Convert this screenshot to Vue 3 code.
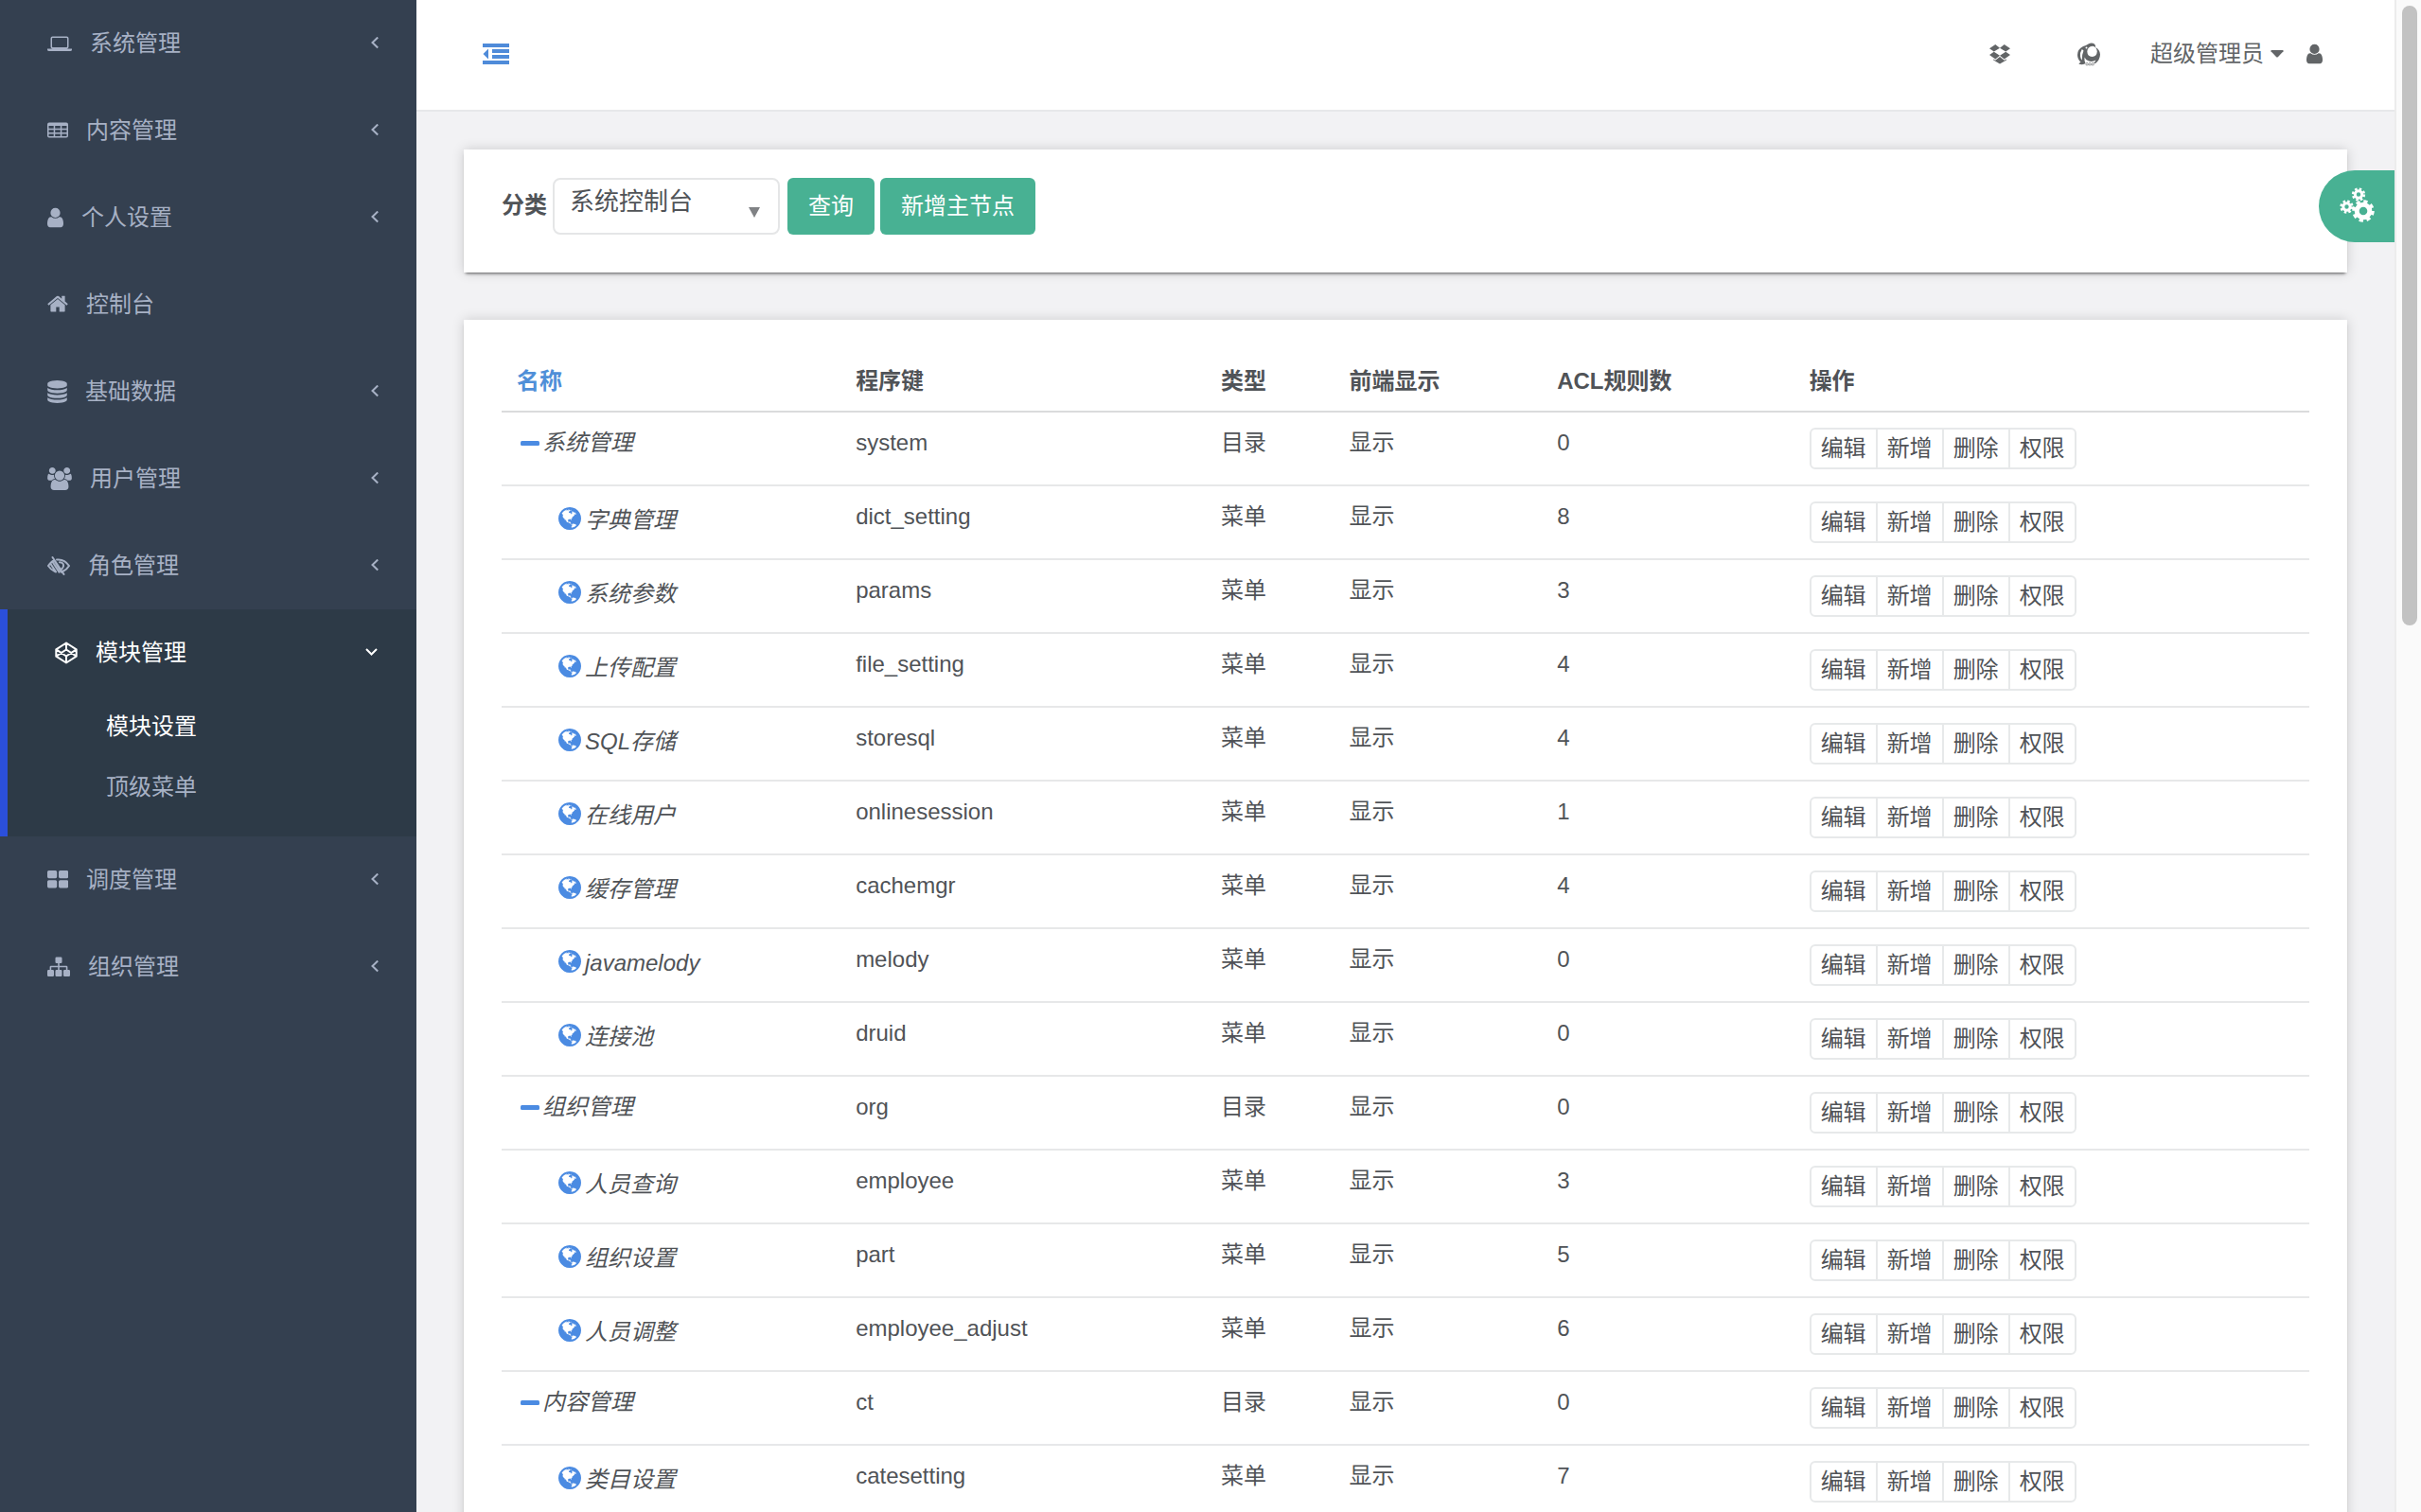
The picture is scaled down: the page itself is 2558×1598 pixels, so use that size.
<script setup>
import { ref } from 'vue'

const menu = [
  { icon: 'laptop', label: '系统管理', arrow: true },
  { icon: 'table', label: '内容管理', arrow: true },
  { icon: 'user', label: '个人设置', arrow: true },
  { icon: 'home', label: '控制台', arrow: false },
  { icon: 'database', label: '基础数据', arrow: true },
  { icon: 'users', label: '用户管理', arrow: true },
  { icon: 'lowvision', label: '角色管理', arrow: true },
  {
    icon: 'codepen',
    label: '模块管理',
    arrow: true,
    children: [
      { label: '模块设置', current: true },
      { label: '顶级菜单', current: false }
    ]
  },
  { icon: 'tiles', label: '调度管理', arrow: true },
  { icon: 'sitemap', label: '组织管理', arrow: true }
]

const userPath =
  'M1536 1399q0 109-62.5 187t-150.5 78h-854q-88 0-150.5-78t-62.5-187q0-85 8.5-160.5t31.5-152 58.5-131 94-89 134.5-34.5q131 128 313 128t313-128q76 0 134.5 34.5t94 89 58.5 131 31.5 152 8.5 160.5zm-256-887q0 159-112.5 271.5t-271.5 112.5-271.5-112.5-112.5-271.5 112.5-271.5 271.5-112.5 271.5 112.5 112.5 271.5z'

const icons = {
  laptop: {
    box: '0 0 26 24',
    w: 26,
    d: 'M5.500 4.500h15q2 0 2 2v9q0 2-2 2h-15q-2 0-2-2v-9q0-2 2-2zM5.700 6q-.7 0-.7.7v8.600q0 .7.700.7h14.600q.7 0 .7-.7V6.700q0-.7-.7-.7zM0 17.600h26v.8q0 1.600-2 1.600H2q-2 0-2-1.600z'
  },
  table: {
    box: '0 0 22 24',
    w: 22,
    d: 'M2 3.500h18q2 0 2 2v12q0 2-2 2H2q-2 0-2-2v-12q0-2 2-2zM1.500 6.900v2.800h5.200V6.900zM8.200 6.900v2.800h5.600V6.900zM15.300 6.900v2.800h5.200V6.900zM1.500 11.200v2.800h5.200v-2.800zM8.200 11.200v2.800h5.600v-2.800zM15.300 11.200v2.800h5.200v-2.800zM1.500 15.500v2.500h5.200v-2.500zM8.200 15.500v2.500h5.600v-2.500zM15.300 15.500v2.500h5.200v-2.500z'
  },
  user: { box: '256 0 1280 1792', w: 17, d: userPath },
  home: {
    box: '64 64 1664 1792',
    w: 22,
    d: 'M1472 992v480q0 26-19 45t-45 19h-384v-384h-256v384h-384q-26 0-45-19t-19-45v-480q0-1 .5-3t.5-3l575-474 575 474q1 2 1 6zm223-69l-62 74q-8 9-21 11h-3q-13 0-21-7l-692-577-692 577q-12 8-24 7-13-2-21-11l-62-74q-8-10-7-23.500t11-21.500l719-599q32-26 76-26t76 26l244 204v-195q0-14 9-23t23-9h192q14 0 23 9t9 23v408l219 182q10 8 11 21.500t-7 23.500z'
  },
  database: {
    box: '128 0 1536 1792',
    w: 21,
    d: 'M896 768q237 0 443-43t325-127v170q0 69-103 128t-280 93.500-385 34.500-385-34.500-280-93.500-103-128v-170q119 84 325 127t443 43zm0 768q237 0 443-43t325-127v170q0 69-103 128t-280 93.500-385 34.500-385-34.500-280-93.500-103-128v-170q119 84 325 127t443 43zm0-384q237 0 443-43t325-127v170q0 69-103 128t-280 93.500-385 34.500-385-34.500-280-93.500-103-128v-170q119 84 325 127t443 43zm0-1152q208 0 385 34.500t280 93.500 103 128v128q0 69-103 128t-280 93.500-385 34.500-385-34.500-280-93.500-103-128v-128q0-69 103-128t280-93.500 385-34.500z'
  },
  users: {
    box: '0 0 1920 1792',
    w: 26,
    d: 'M593 896q-162 5-265 128h-134q-82 0-138-40.500t-56-118.500q0-353 124-353 6 0 43.500 21t97.500 42.500 119 21.500q67 0 133-23-5 37-5 66 0 139 81 256zm1071 637q0 120-73 189.500t-194 69.500h-874q-121 0-194-69.500t-73-189.500q0-53 3.500-103.500t14-109 26.500-108.500 43-97.500 62-81 85.500-53.500 111.500-20q10 0 43 21.500t73 48 107 48 135 21.500 135-21.500 107-48 73-48 43-21.500q61 0 111.500 20t85.500 53.500 62 81 43 97.500 26.500 108.500 14 109 3.500 103.500zm-1024-1277q0 106-75 181t-181 75-181-75-75-181 75-181 181-75 181 75 75 181zm704 384q0 159-112.500 271.500t-271.500 112.500-271.500-112.500-112.500-271.500 112.500-271.500 271.500-112.500 271.500 112.500 112.500 271.500zm576 225q0 78-56 118.500t-138 40.500h-134q-103-123-265-128 81-117 81-256 0-29-5-66 66 23 133 23 59 0 119-21.500t97.500-42.500 43.500-21q124 0 124 353zm-128-609q0 106-75 181t-181 75-181-75-75-181 75-181 181-75 181 75 75 181z'
  },
  lowvision: {
    box: '0 0 24 24',
    w: 24,
    s: 'M5.500 3L17.500 21M10 5.500Q18 4.500 23 12Q20.500 16 17 17.500M13 8.200Q17.500 8.500 17 12.500Q16.500 14 15.500 15M1 12Q4 7.500 7.500 6.300M1 12Q4 16.500 8 18M3.500 10L9 18.400M5.800 8.300L12.500 18.600M8.200 8L15 18.600'
  },
  codepen: {
    box: '0 0 24 24',
    w: 24,
    s: 'M12 1.500L22.700 8.300V15.700L12 22.500L1.300 15.700V8.300zM12 1.500V8.500M12 15.500V22.500M1.300 8.300L12 15.500L22.700 8.300M1.300 15.700L12 8.500L22.700 15.700'
  },
  tiles: {
    box: '0 0 22 24',
    w: 22,
    d: 'M1.600 2h7q1.600 0 1.600 1.600v5q0 1.600-1.600 1.600h-7Q0 10.200 0 8.600v-5Q0 2 1.600 2zM13.600 2h7q1.600 0 1.600 1.600v5q0 1.600-1.600 1.600h-7q-1.600 0-1.600-1.600v-5q0-1.600 1.600-1.600zM1.600 12.200h7q1.600 0 1.600 1.600v5q0 1.600-1.600 1.600h-7q-1.600 0-1.600-1.600v-5q0-1.600 1.600-1.600zM13.600 12.200h7q1.600 0 1.600 1.600v5q0 1.600-1.600 1.600h-7q-1.600 0-1.600-1.600v-5q0-1.600 1.600-1.600z'
  },
  sitemap: {
    box: '0 0 24 24',
    w: 24,
    d: 'M9.700 1.500h4.600q1.200 0 1.200 1.200v4q0 1.200-1.200 1.200h-1.500v2.800h7.300q1.300 0 1.300 1.300v3h1.400q1.200 0 1.200 1.200v4.600q0 1.200-1.200 1.200h-4.600q-1.200 0-1.200-1.200v-4.600q0-1.200 1.200-1.200h1.600v-2.700h-7v2.700h1.500q1.200 0 1.200 1.200v4.600q0 1.200-1.200 1.200H9.700q-1.200 0-1.200-1.200v-4.600q0-1.200 1.200-1.200h1.500v-2.700h-7v2.700h1.600q1.200 0 1.200 1.200v4.600q0 1.200-1.200 1.200H1.200Q0 22 0 20.800v-4.600q0-1.200 1.200-1.200h1.400v-3q0-1.300 1.300-1.300h7.300V7.900H9.700q-1.200 0-1.200-1.200v-4q0-1.200 1.200-1.200z'
  }
}

const globePath =
  'M896 128q209 0 385.500 103t279.500 279.500 103 385.500-103 385.500-279.500 279.500-385.500 103-385.500-103-279.500-279.500-103-385.500 103-385.500 279.500-279.500 385.500-103zm274 521q-2 1-9.500 9.500t-13.500 9.500q2 0 4.500-5t5-11 3.500-7q6-7 22-15 14-6 52-12 34-8 51 11-2-2 9.500-13t14.500-12q3-2 15-4.500t15-7.500l2-22q-12 1-17.500-7t-6.500-21q0 2-6 8 0-7-4.500-8t-11.500 1-9 1q-10-3-15-7.500t-8-16.500-4-15q-2-5-9.500-10.500t-9.500-10.500q-1-2-2.500-5.500t-3-6.500-4-5.500-5.500-2.500-7 5-7.500 10-4.500 5q-3-2-6-1.500t-4.500 1-4.500 3-5 3.500q-3 2-8.500 3t-8.500 2q15-5-1-11-10-4-16-3 9-4 7.500-12t-8.500-14h5q-1-4-8.500-8.500t-17.500-8.500-13-6q-8-5-34-9.500t-33-.5q-5 6-4.500 10.500t4 14 3.500 12.500q1 6-5.500 13t-6.500 12q0 7 14 15.500t10 21.500q-3 8-16 16t-16 12q-5 8-1.500 18.500t10.500 16.500q2 2 1.500 4t-3.500 4.500-5.500 4-6.500 3.500l-3 2q-11 5-20.500-6t-13.500-26q-7-25-16-30-23-8-29 1-5-13-41-26-25-9-58-4 6-1 0-15-7-15-19-12 3-6 4-17.500t1-13.500q3-13 12-23 1-1 7-8.500t9.500-13.500.5-6q35 4 50-11 5-5 11.500-17t10.500-17q9-6 14-5.500t14.500 5.500 14.500 5q14 1 15.500-11t-7.500-20q12 1 3-17-4-7-8-9-12-4-27 5-8 4 2 8-1-1-9.500 10.500t-16.500 17.500-16-5q-1-1-5.500-13.500t-9.500-13.500q-8 0-16 15 3-8-11-15t-24-8q19-12-8-27-7-4-20.500-5t-19.500 4q-5 7-5.500 11.500t5 8 10.500 5.500 11.500 4 8.500 3q14 10 8 14-2 1-8.500 3.500t-11.500 4.500-6 4q-3 4 0 14t-2 14q-5-5-9-17.500t-7-16.500q7 9-25 6l-10-1q-4 0-16 2t-20.500 1-13.500-8q-4-8 0-20 1-4 4-2-4-3-11-9.500t-10-8.500q-46 15-94 41 6 1 12-1 5-2 13-6.500t10-5.500q34-14 42-7l5-5q14 16 20 25-7-4-30-1-20 6-22 12 7 12 5 18-4-3-11.500-10t-14.500-11-15-5q-16 0-22 1-146 80-235 222 7 7 12 8 4 1 5 9t2.500 11 11.500-3q9 8 3 19 1-1 44 27 19 17 21 21 3 11-10 18-1-2-9-9t-9-4q-3 5 .5 18.500t10.500 12.500q-7 0-9.500 16t-2.500 35.500-1 23.500l2 1q-3 12 5.500 34.500t21.500 19.500q-13 3 20 43 6 8 8 9 3 2 12 7.500t15 10 10 10.500q4 5 10 22.500t14 23.500q-2 6 9.500 20t10.500 23q-1 0-2.500 1t-2.500 1q3 7 15.500 14t15.500 13q1 3 2 10t3 11 8 2q2-20-24-62-15-25-17-29-3-5-5.500-15.500t-4.500-14.500q2 0 6 1.500t8.500 3.500 7.500 4 2 3q-3 7 2 17.500t12 18.500 17 19 12 13q6 6 14 19.500t0 13.500q9 0 20 10.500t17 19.500q5 8 8 26t5 24q2 7 8.500 13.500t12.500 9.500l16 8 13 7q5 2 18.500 10.500t21.500 11.500q10 4 16 4t14.500-2.500 13.500-3.500q15-2 29 15t21 21q36 19 55 11-2 1 .5 7.500t8 15.500 9 14.500 5.500 8.500q5 6 18 15t18 15q6-4 7-9-3 8 7 20t18 10q14-3 14-32-31 15-49-18 0-1-2.500-5.500t-4-8.500-2.500-8.500 0-7.500 5-3q9 0 10-3.500t-2-12.500-4-13q-1-8-11-20t-12-15q-5 9-16 8t-16-9q0 1-1.500 5.500t-1.500 6.500q-13 0-15-1 1-3 2.500-17.500t3.500-22.500q1-4 5.500-12t7.500-14.500 4-12.500-4.500-9.500-17.500-2.500q-19 1-26 20-1 3-3 10.500t-5 11.500-9 7q-7 3-24 2t-24-5q-13-8-22.500-29t-9.500-37q0-10 2.500-26.500t3-25-5.500-24.500q3-2 9-9.500t10-10.500q2-1 4.500-1.500t4.500 0 4-1.500 3-6q-1-1-4-3-3-3-4-3 7 3 28.500-1.500t27.500 1.500q15 11 22-2 0-1-2.500-9.500t-.5-13.500q5 27 29 9 3 3 15.500 5t17.500 5q3 2 7 5.500t5.500 4.500 5-.5 8.500-6.500q10 14 12 24 11 40 19 44 7 3 11 2t4.500-9.500 0-14-1.500-12.500l-1-8v-18l-1-8q-15-3-18.500-12t1.500-18.500 15-18.500q1-1 8-3.500t15.500-6.500 12.500-8q21-19 15-35 7 0 11-9-1 0-5-3t-7.500-5-4.500-2q9-5 2-16 5-3 7.500-11t7.500-10q9 12 21 2 7-8 1-16 5-7 20.500-10.500t18.500-9.500q7 2 8-2t1-12 3-12q4-5 15-9t13-5l17-11q3-4 0-4 18 2 31-11 10-11-6-20 3-6-3-9.500t-15-5.500q3-1 11.500-.5t10.500-1.500q15-10-7-16-17-5-43 12zm-163 877q206-36 351-189-3-3-12.500-4.500t-12.500-3.500q-18-7-24-8 1-7-2.500-13t-8-9-12.500-8-11-7q-2-2-7-6t-7-5.500-7.500-4.500-8.500-2-10 1l-3 1q-3 1-5.500 2.500t-5.500 3-4 3 0 2.500q-21-17-36-22-5-1-11-5.500t-10.500-7-10-1.500-11.500 7q-5 5-6 15t-2 13q-7-5 0-17.500t2-18.500q-3-6-10.500-4.500t-12 4.500-11.500 8.500-9 6.500-8.500 5.500-8.500 7.500q-3 4-6 12t-5 11q-2-4-11.500-6.500t-9.500-5.500q2 10 4 35t5 38q7 31-12 48-27 25-29 40-4 22 12 26 0 7-8 20.500t-7 21.500q0 6 2 16z'

const rows = [
  ['系统管理', 'system', 0, true],
  ['字典管理', 'dict_setting', 8],
  ['系统参数', 'params', 3],
  ['上传配置', 'file_setting', 4],
  ['SQL存储', 'storesql', 4],
  ['在线用户', 'onlinesession', 1],
  ['缓存管理', 'cachemgr', 4],
  ['javamelody', 'melody', 0],
  ['连接池', 'druid', 0],
  ['组织管理', 'org', 0, true],
  ['人员查询', 'employee', 3],
  ['组织设置', 'part', 5],
  ['人员调整', 'employee_adjust', 6],
  ['内容管理', 'ct', 0, true],
  ['类目设置', 'catesetting', 7]
].map(([name, key, rules, folder = false]) => ({ name, key, rules, folder }))

const actions = ['编辑', '新增', '删除', '权限']
const category = ref('系统控制台')
</script>

<template>
  <div class="app">
    <nav class="sidebar">
      <ul class="menu">
        <li v-for="item in menu" :key="item.label" :class="{ active: item.children }">
          <a href="#" class="menu-link">
            <svg class="menu-icon" :viewBox="icons[item.icon].box" :width="icons[item.icon].w" height="24" aria-hidden="true">
              <path v-if="icons[item.icon].d" :d="icons[item.icon].d" fill="currentColor" fill-rule="evenodd" />
              <path v-else :d="icons[item.icon].s" fill="none" stroke="currentColor" stroke-width="2" stroke-linejoin="round" stroke-linecap="round" />
            </svg>
            <span class="menu-label">{{ item.label }}</span>
            <svg v-if="item.children" class="arrow" width="14" height="14" viewBox="0 0 14 14" aria-hidden="true">
              <path d="M1 3L6.500 8.500L12 3" fill="none" stroke="currentColor" stroke-width="2" />
            </svg>
            <svg v-else-if="item.arrow" class="arrow" width="8" height="14" viewBox="0 0 8 14" aria-hidden="true">
              <path d="M7.200 .5L1.500 6L7.200 11.500" fill="none" stroke="currentColor" stroke-width="2" />
            </svg>
          </a>
          <ul v-if="item.children" class="submenu">
            <li v-for="sub in item.children" :key="sub.label">
              <a href="#" class="sub-link" :class="{ current: sub.current }">{{ sub.label }}</a>
            </li>
          </ul>
        </li>
      </ul>
    </nav>

    <div class="page">
      <header class="topbar">
        <button class="toggle" type="button" aria-label="收起菜单">
          <svg width="28" height="24" viewBox="0 0 28 24" aria-hidden="true">
            <path d="M0 1h28v4H0zM10 7h18v4H10zM10 13h18v4H10zM0 19h28v4H0zM6 6.500v11L.5 12z" fill="currentColor" />
          </svg>
        </button>
        <div class="tools">
          <a href="#" class="tool" aria-label="应用">
            <svg width="22" height="22" viewBox="0 0 22 22" aria-hidden="true">
              <path d="M6.300 1L11 4.800L4.800 8.600L0 5.200zM15.700 1L22 5.200L17.200 8.600L11 4.800zM0 12L4.800 8.800L11 12.700L6.300 16.500zM22 12L17.200 8.800L11 12.700L15.700 16.500zM11 14L15.700 17.800L18 16.400V17.400L11 21.600L4.200 17.400V16.400L6.300 17.800z" fill="currentColor" />
            </svg>
          </a>
          <a href="#" class="tool" aria-label="主题">
            <svg width="26" height="26" viewBox="0 0 26 26" aria-hidden="true">
              <path d="M7 5Q10 4 12.500 2.500Q16 .5 19 2.500Q20.500 4 20 6Q24.500 8 25 13.500Q24.800 19.500 20 23L18 23Q19.500 21.500 20.500 19.500Q16.500 22 12 20Q9.500 18.800 8.500 16.500Q8 20 9.500 23Q8 24.500 4 24Q2.500 24 2.500 23L4.500 21.800Q1 18.500 1 14Q1 8 7 5zM5.800 8Q3.500 11.500 4 15.500Q4.300 18 5.800 19.500Q5.500 14 7.500 9.500zM17 4.800Q11.500 5.500 11.300 10.500Q11.500 15.500 16.500 16Q21.500 15.500 21.800 10.500Q21.300 5.300 17 4.800z" fill="currentColor" fill-rule="evenodd" />
              <circle cx="10.500" cy="6.500" r="1" fill="#fff" />
              <path d="M10 23.500q1-3 2.200 0v1.300h-2.200zM13 23.500q1-3 2.200 0v1.300h-2.200zM16 23.500q1-3 2.200 0v1.300h-2.200z" fill="none" stroke="currentColor" stroke-width="0.600" />
            </svg>
          </a>
          <a href="#" class="account">
            <span>超级管理员</span>
            <svg width="14" height="8" viewBox="0 0 14 8" aria-hidden="true">
              <path d="M1 0h12q1 .3.500 1.200L7.800 7.300q-.8.600-1.600 0L.5 1.200Q0 .3 1 0z" fill="currentColor" />
            </svg>
            <svg class="avatar" width="17" height="24" viewBox="256 0 1280 1792" aria-hidden="true">
              <path :d="userPath" fill="currentColor" />
            </svg>
          </a>
        </div>
      </header>

      <main class="content">
        <form class="card filter" @submit.prevent>
          <label for="category">分类</label>
          <span class="select-box">
            <select id="category" v-model="category">
              <option>系统控制台</option>
            </select>
          </span>
          <button class="btn query" type="submit">查询</button>
          <button class="btn" type="button">新增主节点</button>
        </form>

        <section class="card list">
          <table>
            <colgroup>
              <col class="c-name" />
              <col class="c-key" />
              <col class="c-type" />
              <col class="c-show" />
              <col class="c-rules" />
              <col />
            </colgroup>
            <thead>
              <tr>
                <th class="accent">名称</th>
                <th>程序键</th>
                <th>类型</th>
                <th>前端显示</th>
                <th>ACL规则数</th>
                <th>操作</th>
              </tr>
            </thead>
            <tbody>
              <tr v-for="row in rows" :key="row.key">
                <td>
                  <span class="node" :class="{ leaf: !row.folder }">
                    <svg v-if="row.folder" width="20" height="6" viewBox="0 0 20 6" aria-hidden="true">
                      <rect width="20" height="5" y="1" rx="1.500" fill="currentColor" />
                    </svg>
                    <svg v-else width="24" height="24" viewBox="128 128 1536 1536" aria-hidden="true">
                      <path :d="globePath" fill="currentColor" />
                    </svg>
                    <em>{{ row.name }}</em>
                  </span>
                </td>
                <td>{{ row.key }}</td>
                <td>{{ row.folder ? '目录' : '菜单' }}</td>
                <td>显示</td>
                <td>{{ row.rules }}</td>
                <td>
                  <span class="group">
                    <button v-for="a in actions" :key="a" type="button">{{ a }}</button>
                  </span>
                </td>
              </tr>
            </tbody>
          </table>
        </section>
      </main>

      <button class="settings" type="button" aria-label="设置">
        <svg width="38" height="38" viewBox="0 0 38 38" fill="none" stroke="#fff" aria-hidden="true">
          <circle cx="25" cy="25" r="6.800" stroke-width="5" />
          <circle cx="25" cy="25" r="10" stroke-width="3.500" stroke-dasharray="4.200 3.654" />
          <circle cx="7.500" cy="20.500" r="3.700" stroke-width="3" />
          <circle cx="7.500" cy="20.500" r="5.900" stroke-width="2.500" stroke-dasharray="2.500 2.134" />
          <circle cx="20" cy="7.500" r="3.700" stroke-width="3" />
          <circle cx="20" cy="7.500" r="5.900" stroke-width="2.500" stroke-dasharray="2.500 2.134" />
        </svg>
      </button>
    </div>

    <div class="scrollbar" aria-hidden="true"><div class="thumb"></div></div>
  </div>
</template>

<style>
body {
  margin: 0;
}
</style>

<style scoped>
.app {
  display: flex;
  height: 100vh;
  overflow: hidden;
  background: #f2f2f4;
  color: #505357;
  font-family: "Liberation Sans", "Noto Sans CJK SC", sans-serif;
  font-size: 24px;
  line-height: 34px;
}

.app *,
.app *::after {
  box-sizing: border-box;
}

svg {
  display: block;
  flex: none;
}

a {
  color: inherit;
  text-decoration: none;
}

button,
select {
  margin: 0;
  font: inherit;
  color: inherit;
  cursor: pointer;
}

ul {
  margin: 0;
  padding: 0;
  list-style: none;
}

.sidebar {
  flex: none;
  width: 440px;
  background: #344050;
  color: #a7b1c5;
}

.menu-link {
  display: flex;
  align-items: center;
  height: 92px;
  padding: 0 40px 0 50px;
}

.menu-label {
  margin-left: 19px;
}

.arrow {
  margin-left: auto;
}

.active {
  border-left: 8px solid #2b4fdb;
  background: #2d3a47;
}

.active > .menu-link {
  color: #fff;
}

.submenu {
  padding-bottom: 20px;
}

.sub-link {
  display: block;
  padding-left: 104px;
  line-height: 64px;
}

.current {
  color: #fff;
}

.page {
  position: relative;
  flex: 1;
  min-width: 0;
}

.topbar {
  display: flex;
  align-items: center;
  justify-content: space-between;
  height: 118px;
  padding: 0 76px 2px 70px;
  border-bottom: 2px solid #e7e8ea;
  background: #fff;
}

.toggle {
  padding: 0;
  border: 0;
  background: none;
  color: #4f8bd9;
}

.tools {
  display: flex;
  align-items: center;
  color: #626567;
}

.tool:first-child {
  margin-right: 70px;
}

.account {
  display: flex;
  align-items: center;
  margin-left: 52px;
}

.account svg {
  margin-left: 7px;
}

.account .avatar {
  margin-left: 24px;
}

.content {
  display: flex;
  flex-direction: column;
  gap: 50px;
  padding: 40px 50px;
}

.card {
  background: #fff;
  box-shadow: 0 3px 3px -2px rgba(0, 0, 0, 0.6), 0 0 12px rgba(0, 0, 0, 0.16);
}

.filter {
  display: flex;
  align-items: center;
  height: 130px;
  padding: 0 40px 10px;
}

.filter label {
  margin-right: 6px;
  padding-bottom: 2px;
  font-weight: 700;
}

.select-box {
  position: relative;
  margin-right: 8px;
}

.select-box::after {
  content: "";
  position: absolute;
  right: 21px;
  bottom: 18px;
  border: 6px solid transparent;
  border-top: 11px solid #808285;
  border-bottom: 0;
  pointer-events: none;
}

select {
  display: block;
  width: 240px;
  height: 60px;
  padding: 0 16px 10px;
  border: 2px solid #e5e6e7;
  border-radius: 8px;
  background: #fff;
  font-size: 26px;
  appearance: none;
}

.btn {
  height: 60px;
  padding: 0 22px;
  border: 0;
  border-radius: 6px;
  background: #48b193;
  color: #fff;
}

.query {
  margin-right: 6px;
}

.list {
  padding: 30px 40px;
}

table {
  width: 100%;
  table-layout: fixed;
  border-collapse: separate;
  border-spacing: 0;
}

.c-name {
  width: 18.75%;
}

.c-key {
  width: 20.2%;
}

.c-type {
  width: 7.1%;
}

.c-show {
  width: 11.5%;
}

.c-rules {
  width: 13.95%;
}

th,
td {
  padding: 16px;
  text-align: left;
  vertical-align: top;
}

th {
  padding: 18px 16px 14px;
  border-bottom: 2px solid #dadbdc;
  font-weight: 700;
}

td {
  height: 78px;
  border-bottom: 2px solid #e7e8e9;
  line-height: 32px;
}

.accent {
  color: #4f8fd8;
}

.node {
  display: flex;
  align-items: center;
  margin-left: 4px;
  gap: 3px;
  white-space: nowrap;
}

.node svg {
  color: #4b8be2;
}

.leaf {
  align-items: flex-start;
  margin-left: 44px;
  gap: 4px;
  line-height: 40px;
}

.leaf svg {
  margin-top: 6px;
}

.group {
  display: flex;
}

.group button {
  width: 72px;
  height: 44px;
  padding: 0;
  border: 2px solid #e7e9ea;
  background: #fff;
  line-height: 34px;
}

.group button + button {
  margin-left: -2px;
}

.group button:first-child {
  border-radius: 6px 0 0 6px;
}

.group button:last-child {
  border-radius: 0 6px 6px 0;
}

.settings {
  position: absolute;
  top: 180px;
  right: 0;
  display: flex;
  align-items: center;
  width: 80px;
  height: 76px;
  padding: 0 0 2px 22px;
  border: 0;
  border-radius: 38px 0 0 38px;
  background: #48b193;
}

.scrollbar {
  flex: none;
  width: 28px;
  padding: 6px 4px 6px 6px;
  border-left: 2px solid #ececec;
  background: #fafafa;
}

.thumb {
  height: 41.3%;
  border-radius: 8px;
  background: #c2c2c2;
}
</style>
